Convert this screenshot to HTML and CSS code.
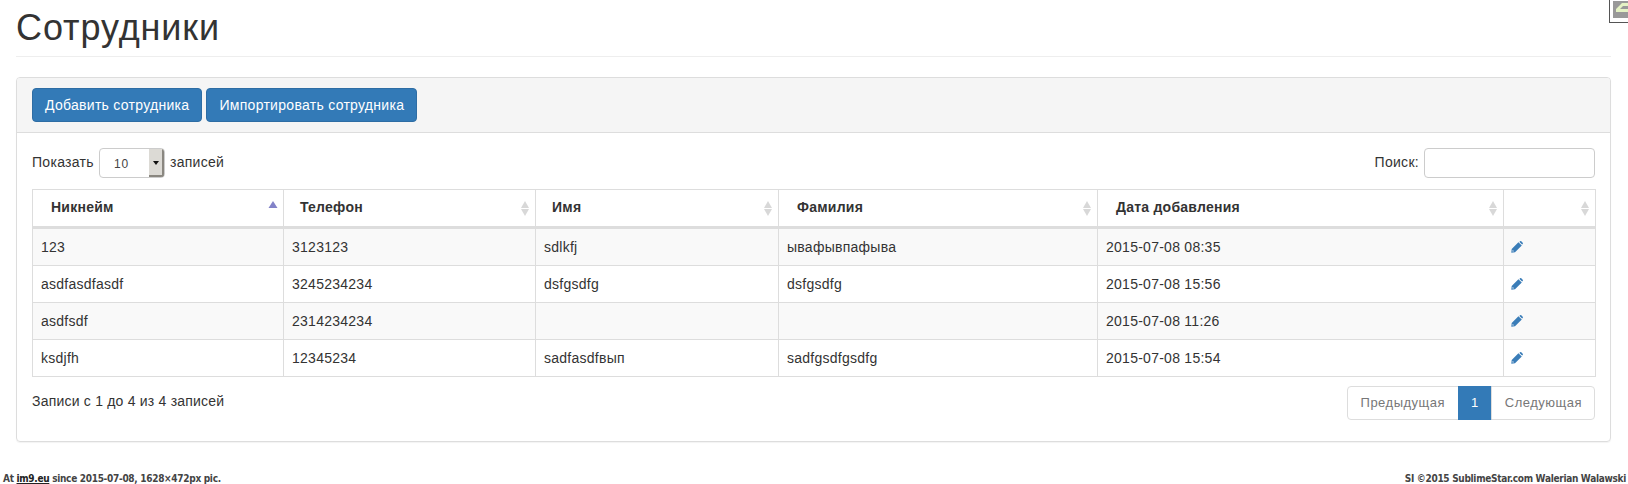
FILE: index.html
```html
<!DOCTYPE html>
<html lang="ru">
<head>
<meta charset="utf-8">
<title>Сотрудники</title>
<link rel="stylesheet" href="styles.css">
</head>
<body>
<svg class="defs" width="0" height="0">
  <defs>
    <path id="pencil" fill-rule="evenodd" d="M8.4.9 9 .3a1 1 0 0 1 1.300 0l1.400 1.400a1 1 0 0 1 0 1.300l-.6.6ZM7.400 1.200 10.800 4.600 4 11.300.3 11.700.7 8ZM1.700 8.900 1.400 10.600 3.100 10.300Z"/>
    <g id="sort-both" fill="#d8d8d8">
      <path d="M5 3 9 10H1Z"/>
      <path d="M1 11H9L5 18Z"/>
    </g>
  </defs>
</svg>
<div class="corner"><svg width="15" height="17" viewBox="0 0 15 17"><rect width="15" height="17" fill="#999"/><path d="M3 11V8L9 2H15V5H10L7 8H15V11Z" fill="#e4f2c4"/></svg></div>
<div class="page">
  <h1 class="title">Сотрудники</h1>
  <section class="panel">
    <div class="panel-heading">
      <a class="btn">Добавить сотрудника</a>
      <a class="btn">Импортировать сотрудника</a>
    </div>
    <div class="panel-body">
      <div class="controls">
        <div class="length">
          <span class="label">Показать</span>
          <div class="select"><span class="select-value">10</span><span class="select-arrow"></span></div>
          <span class="label">записей</span>
        </div>
        <div class="search">
          <span class="label">Поиск:</span>
          <input class="search-input" type="text">
        </div>
      </div>
      <table class="grid">
        <colgroup>
          <col class="c1"><col class="c2"><col class="c3"><col class="c4"><col class="c5"><col class="c6">
        </colgroup>
        <thead>
          <tr>
            <th class="sorted">Никнейм<svg class="sort" width="10" height="20" viewBox="0 0 10 20"><path d="M5 3 9.500 10H.5Z" fill="#8282c8"/></svg></th>
            <th class="th-tel">Телефон<svg class="sort" width="10" height="20" viewBox="0 0 10 20"><use href="#sort-both"/></svg></th>
            <th class="th-name">Имя<svg class="sort" width="10" height="20" viewBox="0 0 10 20"><use href="#sort-both"/></svg></th>
            <th>Фамилия<svg class="sort" width="10" height="20" viewBox="0 0 10 20"><use href="#sort-both"/></svg></th>
            <th>Дата добавления<svg class="sort" width="10" height="20" viewBox="0 0 10 20"><use href="#sort-both"/></svg></th>
            <th><svg class="sort" width="10" height="20" viewBox="0 0 10 20"><use href="#sort-both"/></svg></th>
          </tr>
        </thead>
        <tbody>
          <tr class="odd"><td>123</td><td>3123123</td><td>sdlkfj</td><td>ывафывпафыва</td><td>2015-07-08 08:35</td><td><svg class="pencil" width="12" height="12" viewBox="0 0 12 12"><use href="#pencil"/></svg></td></tr>
          <tr><td>asdfasdfasdf</td><td>3245234234</td><td>dsfgsdfg</td><td>dsfgsdfg</td><td>2015-07-08 15:56</td><td><svg class="pencil" width="12" height="12" viewBox="0 0 12 12"><use href="#pencil"/></svg></td></tr>
          <tr class="odd"><td>asdfsdf</td><td>2314234234</td><td></td><td></td><td>2015-07-08 11:26</td><td><svg class="pencil" width="12" height="12" viewBox="0 0 12 12"><use href="#pencil"/></svg></td></tr>
          <tr><td>ksdjfh</td><td>12345234</td><td>sadfasdfвып</td><td>sadfgsdfgsdfg</td><td>2015-07-08 15:54</td><td><svg class="pencil" width="12" height="12" viewBox="0 0 12 12"><use href="#pencil"/></svg></td></tr>
        </tbody>
      </table>
      <div class="table-footer">
        <div class="info">Записи с 1 до 4 из 4 записей</div>
        <nav class="pager">
          <a class="pager-item">Предыдущая</a>
          <a class="pager-item current">1</a>
          <a class="pager-item">Следующая</a>
        </nav>
      </div>
    </div>
  </section>
</div>
<footer class="credit">
  <span>At <a class="credit-link">im9.eu</a> since 2015-07-08, 1628×472px pic.</span>
  <span>SI ©2015 SublimeStar.com Walerian Walawski</span>
</footer>
</body>
</html>
```
FILE: styles.css
```css
* { box-sizing: border-box; }
html, body { margin: 0; padding: 0; background: #fff; }
body {
  position: relative;
  width: 1628px;
  height: 484px;
  overflow: hidden;
  font-family: "Liberation Sans", Arial, sans-serif;
  font-size: 14px;
  line-height: 20px;
  color: #333;
  letter-spacing: 0.3px;
}
.defs { position: absolute; }
.page { padding: 0 17px 0 16px; }
.title {
  margin: 0 0 20px;
  height: 57px;
  padding-top: 8px;
  border-bottom: 1px solid #eee;
  font-size: 36px;
  line-height: 40px;
  font-weight: 400;
  letter-spacing: 0.9px;
}
.panel {
  height: 365px;
  border: 1px solid #ddd;
  border-radius: 4px;
  box-shadow: 0 1px 1px rgba(0,0,0,.05);
}
.panel-heading {
  display: flex;
  gap: 4px;
  height: 55px;
  padding: 10px 15px;
  background: #f5f5f5;
  border-bottom: 1px solid #ddd;
  border-radius: 3px 3px 0 0;
}
.btn {
  height: 34px;
  padding: 6px 12px;
  border: 1px solid #2e6da4;
  border-radius: 4px;
  background: #337ab7;
  color: #fff;
  letter-spacing: 0.29px;
}
.panel-body { padding: 15px; }
.controls {
  display: flex;
  justify-content: space-between;
  height: 30px;
  margin-bottom: 11px;
}
.length, .search { display: flex; align-items: center; gap: 5px; }
.label { padding-bottom: 2px; }
.select {
  display: flex;
  width: 66px;
  height: 30px;
  border: 1px solid #ccc;
  border-radius: 4px;
  overflow: hidden;
  font-size: 12px;
}
.select-value { flex: 1; padding-left: 14px; line-height: 30px; letter-spacing: 1px; color: #444; }
.select-arrow {
  position: relative;
  width: 15px;
  background: #dcdad5;
  border-right: 2px solid #8a8780;
  border-bottom: 2px solid #8a8780;
}
.select-arrow::after {
  content: "";
  position: absolute;
  left: 4px;
  top: 12px;
  border: 3px solid transparent;
  border-top: 4px solid #111;
}
.search-input {
  width: 171px;
  height: 30px;
  border: 1px solid #ccc;
  border-radius: 4px;
  background: #fff;
}
.grid {
  width: 1563px;
  table-layout: fixed;
  border-collapse: collapse;
  border: 1px solid #ddd;
}
.c1 { width: 251px; }
.c2 { width: 252px; }
.c3 { width: 243px; }
.c4 { width: 319px; }
.c5 { width: 406px; }
.c6 { width: 92px; }
.grid th, .grid td { border: 1px solid #ddd; }
.grid th {
  position: relative;
  height: 38px;
  padding: 6px 18px 8px;
  border-bottom: 3px solid #ddd;
  text-align: left;
  font-weight: 700;
  letter-spacing: 0.24px;
}
.grid th.th-tel { padding-left: 16px; }
.grid th.th-name { padding-left: 16px; }
.sort { position: absolute; right: 5px; top: 8px; }
.grid td { height: 37px; padding: 8px; letter-spacing: 0.26px; }
.odd { background: #f9f9f9; }
.pencil { display: block; margin-left: -1px; fill: #3a7db8; }
.table-footer {
  display: flex;
  justify-content: space-between;
  margin-top: 9px;
}
.info { padding-top: 5px; letter-spacing: 0.21px; }
.pager { display: flex; height: 34px; }
.pager-item {
  padding: 6px 13px;
  border: 1px solid #ddd;
  margin-left: -1px;
  color: #777;
  background: #fff;
  font-size: 13px;
  letter-spacing: 0.5px;
}
.pager-item:first-child { border-radius: 4px 0 0 4px; }
.pager-item:last-child { padding-right: 12px; border-radius: 0 4px 4px 0; }
.pager-item.current { background: #337ab7; border-color: #337ab7; color: #fff; padding: 6px 12px; }
.credit {
  position: absolute;
  left: 3px;
  right: 2px;
  bottom: -1px;
  display: flex;
  justify-content: space-between;
  font-family: "DejaVu Sans", sans-serif;
  font-stretch: condensed;
  font-size: 10px;
  line-height: 12px;
  font-weight: 700;
  letter-spacing: -0.3px;
  color: #444;
}
.credit-link { color: #222; text-decoration: underline; }
.corner {
  position: absolute;
  top: -1px;
  right: 0;
  width: 19px;
  height: 24px;
  padding: 1px 0 0 3px;
  border: 1px solid #555;
  border-right: 0;
  overflow: hidden;
}
.corner svg { display: block; }
```
